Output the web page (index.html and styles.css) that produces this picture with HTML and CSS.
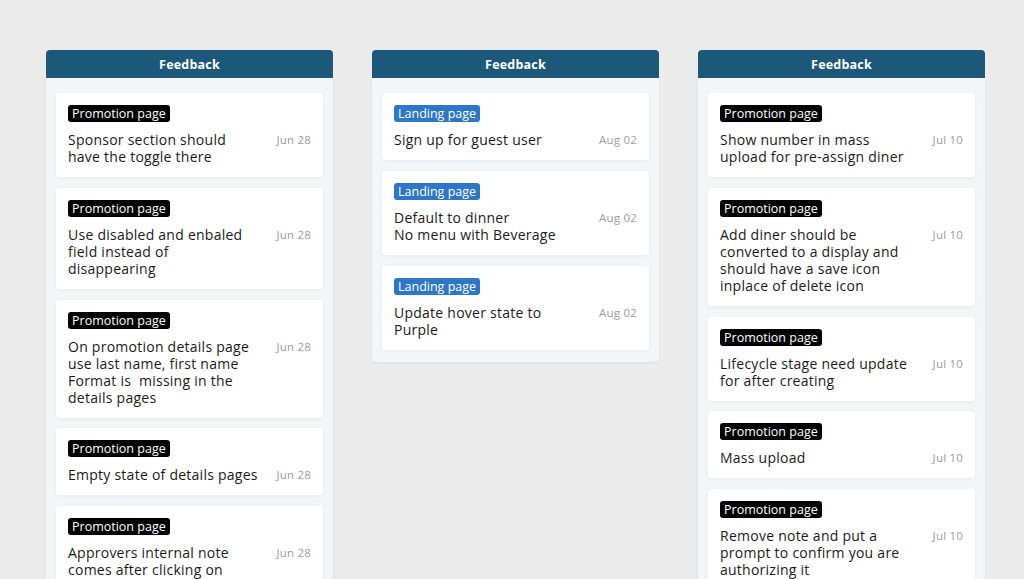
FILE: index.html
```html
<!DOCTYPE html>
<html>
  <head>
    <meta name="viewport" content="width=device-width, initial-scale=1.0">
    <title>Feedback board</title>
    <link rel="stylesheet" href="styles.css">
  </head>
  <body>
    <div class="board">

      <!-- Column 1 -->
      <div class="column">
        <div class="column-header">Feedback</div>
        <div class="column-body">
          <div class="card">
            <span class="tag">Promotion page</span>
            <div class="card-row">
              <div class="title">Sponsor section should have the toggle there</div>
              <div class="date">Jun 28</div>
            </div>
          </div>
          <div class="card">
            <span class="tag">Promotion page</span>
            <div class="card-row">
              <div class="title">Use disabled and enbaled field instead of<br>disappearing</div>
              <div class="date">Jun 28</div>
            </div>
          </div>
          <div class="card">
            <span class="tag">Promotion page</span>
            <div class="card-row">
              <div class="title">On promotion details page use last name, first name Format is&nbsp; missing in the details pages</div>
              <div class="date">Jun 28</div>
            </div>
          </div>
          <div class="card">
            <span class="tag">Promotion page</span>
            <div class="card-row">
              <div class="title">Empty state of details pages</div>
              <div class="date">Jun 28</div>
            </div>
          </div>
          <div class="card">
            <span class="tag">Promotion page</span>
            <div class="card-row">
              <div class="title">Approvers internal note comes after clicking on approve button</div>
              <div class="date">Jun 28</div>
            </div>
          </div>
        </div>
      </div>

      <!-- Column 2 -->
      <div class="column">
        <div class="column-header">Feedback</div>
        <div class="column-body">
          <div class="card">
            <span class="tag blue">Landing page</span>
            <div class="card-row">
              <div class="title">Sign up for guest user</div>
              <div class="date">Aug 02</div>
            </div>
          </div>
          <div class="card">
            <span class="tag blue">Landing page</span>
            <div class="card-row">
              <div class="title">Default to dinner<br>No menu with Beverage</div>
              <div class="date">Aug 02</div>
            </div>
          </div>
          <div class="card">
            <span class="tag blue">Landing page</span>
            <div class="card-row">
              <div class="title">Update hover state to Purple</div>
              <div class="date">Aug 02</div>
            </div>
          </div>
        </div>
      </div>

      <!-- Column 3 -->
      <div class="column">
        <div class="column-header">Feedback</div>
        <div class="column-body">
          <div class="card">
            <span class="tag">Promotion page</span>
            <div class="card-row">
              <div class="title">Show number in mass upload for pre-assign diner</div>
              <div class="date">Jul 10</div>
            </div>
          </div>
          <div class="card">
            <span class="tag">Promotion page</span>
            <div class="card-row">
              <div class="title">Add diner should be converted to a display and should have a save icon inplace of delete icon</div>
              <div class="date">Jul 10</div>
            </div>
          </div>
          <div class="card">
            <span class="tag">Promotion page</span>
            <div class="card-row">
              <div class="title">Lifecycle stage need update for after creating</div>
              <div class="date">Jul 10</div>
            </div>
          </div>
          <div class="card">
            <span class="tag">Promotion page</span>
            <div class="card-row">
              <div class="title">Mass upload</div>
              <div class="date">Jul 10</div>
            </div>
          </div>
          <div class="card">
            <span class="tag">Promotion page</span>
            <div class="card-row">
              <div class="title">Remove note and put a prompt to confirm you are authorizing it</div>
              <div class="date">Jul 10</div>
            </div>
          </div>
        </div>
      </div>

    </div>
  </body>
</html>
```

FILE: styles.css
```css
body {
  margin: 0px;
  background-color: #ebebeb;
  font-family: "Open Sans", "DejaVu Sans", sans-serif;
  color: #1a1a1a;
  overflow: hidden;
}

.board {
  display: flex;
  align-items: flex-start;
  gap: 39px;
  padding: 50px 0px 0px 46px;
}

.column {
  width: 287px;
  flex: none;
}

.column-header {
  height: 28px;
  line-height: 29px;
  background-color: #1b5879;
  color: white;
  text-align: center;
  font-size: 12.5px;
  font-weight: bold;
  letter-spacing: 0.2px;
  border-radius: 4px 4px 0px 0px;
}

.column-body {
  display: flex;
  flex-direction: column;
  gap: 10.75px;
  padding: 15px 10px 12px 10px;
  background-color: #f4f5f7;
  border-radius: 0px 0px 4px 4px;
  box-shadow: 0px 1px 3px rgba(0, 0, 0, 0.06);
}

.card {
  display: flex;
  flex-direction: column;
  align-items: flex-start;
  background-color: white;
  border-radius: 4px;
  padding: 12px;
  box-shadow: 0px 1px 4px rgba(0, 0, 0, 0.05);
}

.tag {
  display: block;
  background-color: #000;
  color: white;
  font-size: 12.5px;
  line-height: 17px;
  padding: 0px 4px;
  border-radius: 3px;
}

.tag.blue { background-color: #2e76c6; }

.card-row {
  display: flex;
  justify-content: space-between;
  align-self: stretch;
  margin-top: 9px;
}

.title {
  width: 192px;
  font-size: 14px;
  letter-spacing: 0.25px;
  line-height: 17px;
}

.date {
  font-size: 11.5px;
  letter-spacing: 0.2px;
  line-height: 17px;
  color: #9b9b9b;
}
```
